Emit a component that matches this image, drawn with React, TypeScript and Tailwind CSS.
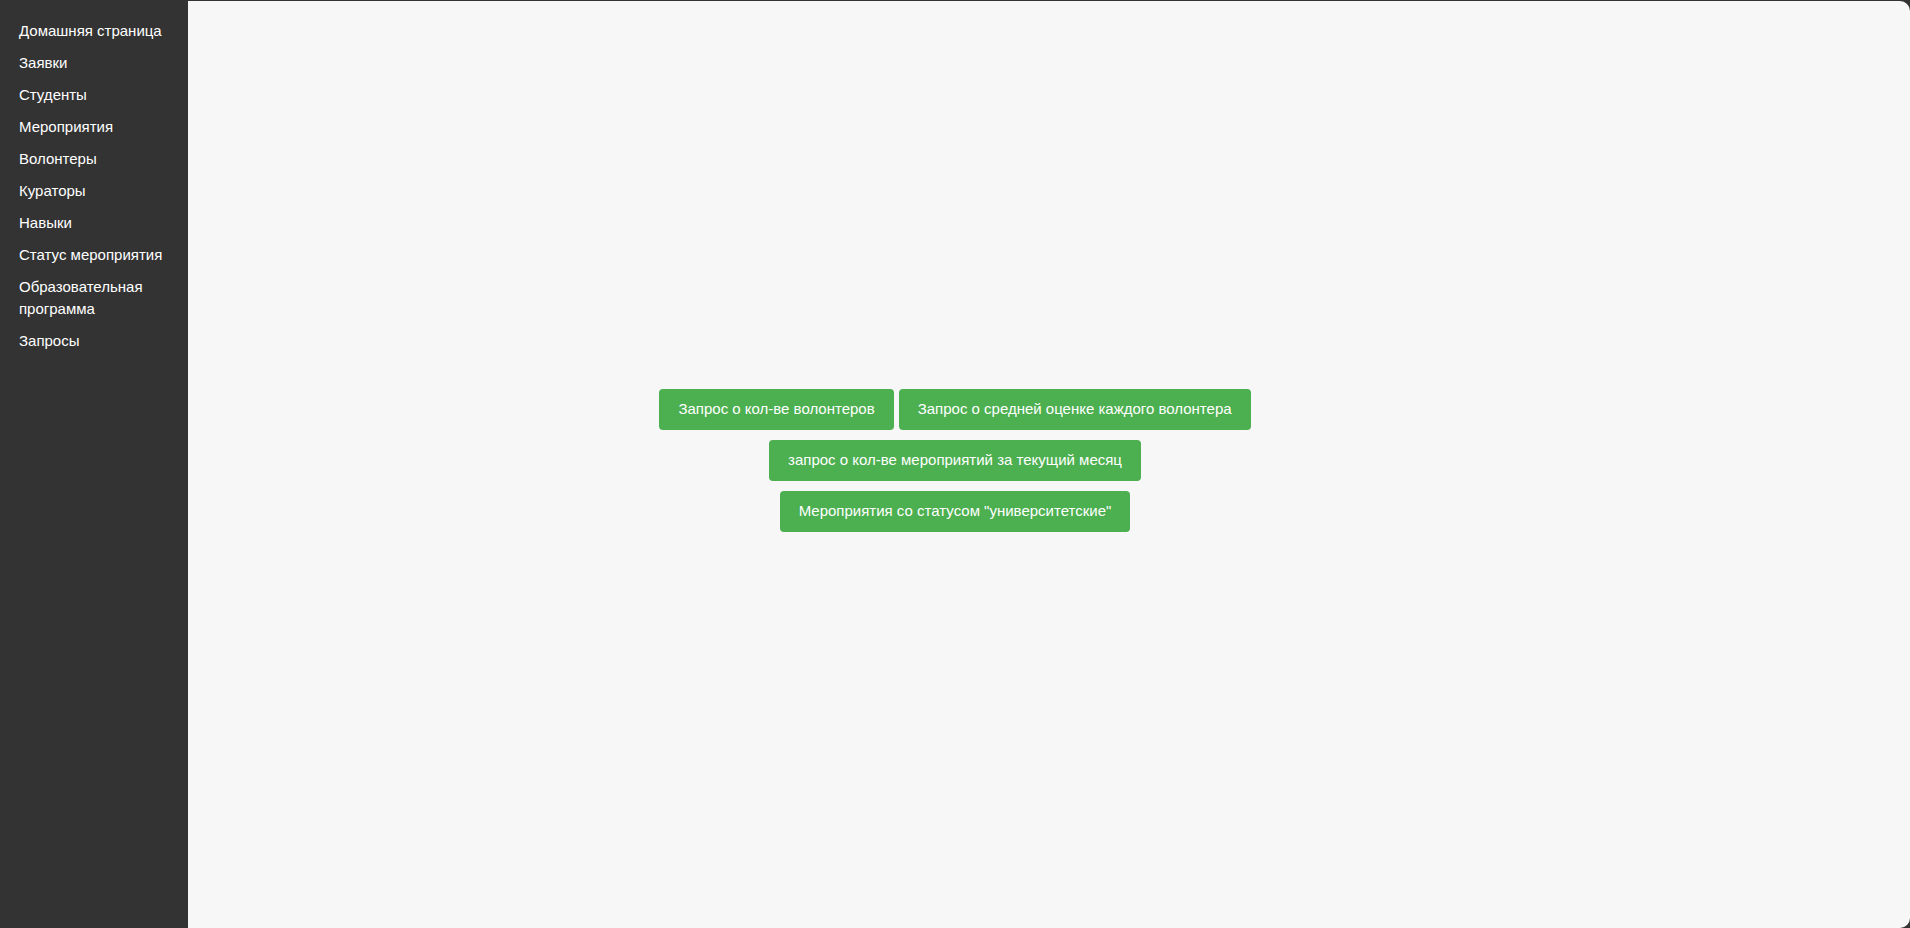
const navItems = [
  'Домашняя страница',
  'Заявки',
  'Студенты',
  'Мероприятия',
  'Волонтеры',
  'Кураторы',
  'Навыки',
  'Статус мероприятия',
  'Образовательная программа',
  'Запросы',
];

function QueryButton({ label }: { label: string }) {
  return (
    <button className="my-[5px] h-[41px] rounded-[4px] bg-[#4caf50] px-[19px] text-[15px] text-white">
      {label}
    </button>
  );
}

export default function App() {
  return (
    <div
      className="flex h-[928px] w-[1910px] bg-[#333333] pt-px"
      style={{ fontFamily: '"Liberation Sans", Arial, sans-serif' }}
    >
      <nav className="w-[188px] shrink-0 px-[19px] pt-[14px]">
        <ul>
          {navItems.map((item) => (
            <li key={item} className="py-[5px] text-[15px] leading-[22px] text-white">
              {item}
            </li>
          ))}
        </ul>
      </nav>

      <main className="flex flex-1 rounded-r-[10px] bg-[#f7f7f7]">
        <div className="flex w-[1534px] flex-col items-center justify-center pb-[8px]">
          <div className="flex gap-[5px]">
            <QueryButton label="Запрос о кол-ве волонтеров" />
            <QueryButton label="Запрос о средней оценке каждого волонтера" />
          </div>
          <QueryButton label="запрос о кол-ве мероприятий за текущий месяц" />
          <QueryButton label='Мероприятия со статусом "университетские"' />
        </div>
      </main>
    </div>
  );
}
